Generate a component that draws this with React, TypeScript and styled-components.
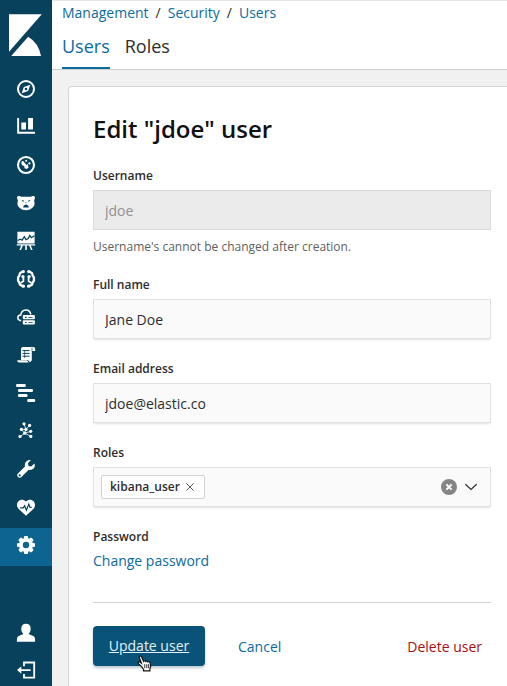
import React from "react";
import styled, { createGlobalStyle } from "styled-components";

const GlobalStyle = createGlobalStyle`
  * { box-sizing: border-box; }
  body { margin: 0; overflow: hidden; background: #f1f1f1; }
  a { text-decoration: none; }
`;

const colors = {
  nav: "#07415b",
  navActive: "#0d6490",
  link: "#0b6b9e",
  text: "#2d2d2d",
  danger: "#a30f14",
};

const Shell = styled.div`
  display: flex;
  width: 507px;
  height: 686px;
  overflow: hidden;
  font-family: "Open Sans", sans-serif;
  font-size: 14px;
  line-height: 20px;
  color: ${colors.text};
`;

const SideNav = styled.nav`
  flex: 0 0 52px;
  display: flex;
  flex-direction: column;
  background: ${colors.nav};
`;

const LogoLink = styled.a`
  display: block;
  height: 72px;
`;

const NavItem = styled.a<{ $active?: boolean }>`
  display: flex;
  justify-content: center;
  height: 38px;
  flex: none;
  padding-top: 7px;
  background: ${(p) => (p.$active ? colors.navActive : "transparent")};
`;

const NavFooter = styled.div`
  margin-top: 50px;
`;

const NavIcon = styled.svg`
  display: block;
  width: 20px;
  height: 20px;
  fill: #fff;
`;

const Main = styled.div`
  flex: 1;
  min-width: 0;
  display: flex;
  flex-direction: column;
  background: #f1f1f1;
`;

const Header = styled.header`
  height: 70px;
  flex: none;
  padding-left: 10px;
  background: #fff;
  border-top: 1px solid #e6e6e6;
  border-bottom: 1px solid #d0d0d0;
`;

const Breadcrumbs = styled.div`
  display: flex;
  gap: 7px;
  padding-top: 2px;
  height: 27px;
`;

const Link = styled.a<{ $danger?: boolean }>`
  color: ${(p) => (p.$danger ? colors.danger : colors.link)};
`;

const Tabs = styled.div`
  display: flex;
  gap: 15px;
  height: 41px;
`;

const Tab = styled.a<{ $selected?: boolean }>`
  height: 41px;
  padding-top: 6px;
  font-size: 18px;
  line-height: 25px;
  color: ${(p) => (p.$selected ? colors.link : colors.text)};
  border-bottom: 2px solid ${(p) => (p.$selected ? colors.link : "transparent")};
`;

const Panel = styled.main`
  flex: 1;
  margin: 16px 0 0 16px;
  padding: 24px 16px 0 24px;
  background: #fff;
  border: 1px solid #d6d6d6;
  border-width: 1px 0 0 1px;
  border-radius: 4px 0 0 0;
`;

const Title = styled.h1`
  margin: 0;
  height: 55px;
  font-size: 24px;
  line-height: 36px;
  font-weight: 600;
  color: #111;
`;

const Row = styled.div<{ $height: number }>`
  height: ${(p) => p.$height}px;
`;

const Label = styled.label`
  display: block;
  height: 24px;
  font-size: 12px;
  line-height: 20px;
  font-weight: 600;
`;

const Input = styled.input`
  display: block;
  width: 100%;
  height: 40px;
  padding: 0 11px;
  font: inherit;
  color: ${colors.text};
  background: #fafafa;
  border: 1px solid #e0e0e0;
  border-radius: 0;
  box-shadow: 0 2px 2px -1px rgba(0, 0, 0, 0.12);
  &:disabled {
    color: #919191;
    background: #ebebeb;
    border-color: #dadada;
    box-shadow: none;
  }
`;

const Help = styled.div`
  padding-top: 7px;
  font-size: 12px;
  line-height: 20px;
  color: #606060;
`;

const ComboBox = styled.div`
  display: flex;
  align-items: center;
  height: 40px;
  padding: 0 13px 0 7px;
  background: #fafafa;
  border: 1px solid #e0e0e0;
  box-shadow: 0 2px 2px -1px rgba(0, 0, 0, 0.12);
`;

const Pill = styled.span`
  display: flex;
  align-items: center;
  gap: 6px;
  height: 24px;
  padding: 0 10px 0 8px;
  font-size: 12px;
  font-weight: 600;
  background: #fff;
  border: 1px solid #d2d2d2;
  border-radius: 2px;
`;

const Controls = styled.span`
  display: flex;
  align-items: center;
  gap: 8px;
  margin-left: auto;
`;

const Glyph = styled.svg`
  display: block;
  flex: none;
`;

const Footer = styled.div`
  display: flex;
  align-items: center;
  padding-top: 23px;
  border-top: 1px solid #d2d2d2;
`;

const Button = styled.a`
  position: relative;
  width: 112px;
  height: 40px;
  margin-right: 33px;
  text-align: center;
  line-height: 40px;
  color: #e3f0f6;
  text-decoration: underline;
  background: #0a5378;
  border-radius: 4px;
  box-shadow: 0 2px 3px rgba(20, 60, 80, 0.28);
`;

const Pointer = styled.svg`
  position: absolute;
  left: 43px;
  top: 29px;
`;

const FooterLink = styled(Link)`
  padding-top: 2px;
  margin-left: ${(p) => (p.$danger ? "auto" : "0")};
  margin-right: ${(p) => (p.$danger ? "9px" : "0")};
`;

const n = colors.nav;

const icons: { name: string; art: React.ReactNode }[] = [
  {
    name: "Discover",
    art: (
      <>
        <circle cx="10" cy="10" r="8" fill="none" stroke="#fff" strokeWidth="2" />
        <path d="M14.3 5.7 12.2 12 5.7 14.3 7.8 8z" />
        <circle cx="10" cy="10" r="1.3" fill={n} />
      </>
    ),
  },
  {
    name: "Visualize",
    art: <path d="M1.2 1h1.9v13.8H19v2H1.2zM5.3 5.6H10v7H5.3zM12.1 1H17v11.6h-4.9z" />,
  },
  {
    name: "Dashboard",
    art: (
      <>
        <circle cx="10" cy="10" r="8" fill="none" stroke="#fff" strokeWidth="2.1" />
        <circle cx="10.2" cy="5.7" r="1" />
        <circle cx="13.4" cy="8.4" r="1.1" />
        <path d="M5.3 8.3 5.9 6.1l1.5.2 3 3.6 1.2-.9 1 3.6-2 1.4-2-.7-.4-2.2-2-.9z" />
      </>
    ),
  },
  {
    name: "Timelion",
    art: (
      <>
        <path d="M1 4.6C1 2.9 3.8 2.600 5.200 3.800h9.600C16.200 2.600 19 2.900 19 4.600c0 1-.5 1.900-.9 2.700l.5 3.200c.1 3.400-3.900 6.700-8.600 6.700s-8.700-3.300-8.600-6.700l.5-3.200C1.500 6.500 1 5.600 1 4.600z" />
        <path d="m6 7 2 .8-.3.9-1.900-.9zm8 0-2 .8.3.9 1.900-.9zM9.100 9.600h1.800L10 10.600zM7.100 14.500l.7-2.100 2.200-.8 2.200.8.7 2.100z" fill={n} />
      </>
    ),
  },
  {
    name: "Canvas",
    art: (
      <>
        <path d="M1.4.8h17.2v11.6H1.4zM.8 13.2h18.4v1.3H.8zM5.2 14.5h1.7L5 18.9H3.4zM9.2 14.5h1.6v4.4H9.2zM13.1 14.5h1.7l1.8 4.4H15z" />
        <path d="m1.6 9.5 2.7-1.3 1.8 1 2.3-3.5 1.6 3 2.2-1.2 1.6-3 1.5 2.2 3.1-2" fill="none" stroke={n} strokeWidth="1.3" />
      </>
    ),
  },
  {
    name: "Machine Learning",
    art: (
      <>
        <g fill="none" stroke="#fff" strokeWidth="2.3">
          <path d="M7 2.3 4 4.2 3.100 7.100 2.100 8.300v3.500l1 1.300.9 2.700L7.300 17.400M13 2.300l3 1.900.9 2.900 1 1.200v3.500l-1 1.300-.9 2.700-3.300 1.600" />
          <path d="M7.400 7.800v4.400l-3 1.800M12.600 7.800v4.400l3 1.800" strokeWidth="1.8" />
        </g>
        <circle cx="7.300" cy="2.600" r="1.6" /><circle cx="12.700" cy="2.600" r="1.6" />
        <circle cx="6.900" cy="7.600" r="1.6" /><circle cx="13.100" cy="7.600" r="1.6" />
        <circle cx="7.400" cy="17.200" r="1.6" /><circle cx="12.600" cy="17.200" r="1.6" />
      </>
    ),
  },
  {
    name: "Infrastructure",
    art: (
      <>
        <path d="M5.2 13.4H4C.9 12.7 1.1 8 4.8 8 5.6 1.5 13.7 1.2 14.8 7.4" fill="none" stroke="#fff" strokeWidth="1.5" />
        <rect x="6.8" y="8.1" width="12.1" height="4.2" rx="1" />
        <rect x="6.8" y="13.2" width="12.1" height="4.4" rx="1" />
        <path d="M9 9.7h1.7v1.2H9zM9 14.9h1.7v1.2H9zM12.5 10h4.2v.7h-4.2zM12.5 15.2h4.2v.7h-4.2z" fill={n} />
      </>
    ),
  },
  {
    name: "Logs",
    art: (
      <>
        <path d="M6.7 2h10.5a2 2 0 0 1 2 2.1v1.8h-3.4v9.2q-.2 2-2.2 1.8L12 15H5V4q0-1.7 1.7-2zM1.1 15.2h10l1.5 2.4H3.3q-2 0-2.2-2.4z" />
        <path d="M6.5 5.6h7M6.5 8.4h7M6.5 11.2h7" stroke={n} strokeWidth="1" />
        <path d="M8.6 5v8M16 2.6v3.3" stroke={n} strokeWidth=".7" />
      </>
    ),
  },
  {
    name: "APM",
    art: (
      <>
        <rect x="0" y="1.1" width="9.8" height="2.9" rx="1.2" />
        <rect x="2" y="6.1" width="15" height="2.9" rx="1.2" />
        <rect x="2" y="11.1" width="9.5" height="2.9" rx="1.2" />
        <rect x="11.2" y="16.1" width="8" height="2.9" rx="1.2" />
      </>
    ),
  },
  {
    name: "Graph",
    art: (
      <>
        <path d="m8 2.8 2 5.6-1.3 3.8L4.2 15.4M5.4 8.4l3.3 3.8 6 3.1M13.6 4.4 10 8.4H5.4M8.7 12.2l6-1.9" fill="none" stroke="#fff" strokeWidth=".8" />
        {[[8, 2.8], [13.6, 4.4], [5.4, 8.4], [10, 8.4], [14.7, 10.3], [8.7, 12.2], [4, 15.5], [14.8, 15.4]].map(([x, y]) => (
          <circle key={`${x}-${y}`} cx={x} cy={y} r="1.6" />
        ))}
      </>
    ),
  },
  {
    name: "Dev Tools",
    art: (
      <path
        fillRule="evenodd"
        d="M14.9 1.1 12 4.3l.5 2.6 2.7.6 3.2-2.9c1.5 3.5-1.3 7.2-5.6 6.2L5.4 18c-2 1.9-5.5-.9-3.7-3.2L9 7.6C8 3.9 11.2.2 14.9 1.1zM3.7 15.2a1.1 1.1 0 1 0 0 2.2 1.1 1.1 0 0 0 0-2.2z"
      />
    ),
  },
  {
    name: "Monitoring",
    art: (
      <>
        <path d="M10 18.8 2.2 11.6C-1.7 6.2 4.6-.3 10 4.6c5.4-4.9 11.7 1.6 7.8 7z" />
        <path d="M4.2 10.8h3.1l1.3-2.1 1.8 4.4 2.4-6 1.2 3.3h1.7" fill="none" stroke={n} strokeWidth="1.2" />
      </>
    ),
  },
  {
    name: "Management",
    art: (
      <>
        {[0, 45, 90, 135].map((a) => (
          <rect key={a} x="7.9" y="1" width="4.2" height="18" rx="1.1" transform={`rotate(${a} 10 10)`} />
        ))}
        <circle cx="10" cy="10" r="7" />
        <circle cx="10" cy="10" r="3.2" fill={colors.navActive} />
      </>
    ),
  },
];

const fields = [
  { label: "Username", value: "jdoe", disabled: true, height: 109, help: "Username's cannot be changed after creation." },
  { label: "Full name", value: "Jane Doe", height: 84 },
  { label: "Email address", value: "jdoe@elastic.co", height: 84 },
];

export default function App() {
  return (
    <Shell>
      <GlobalStyle />
      <SideNav>
        <LogoLink>
          <Glyph width="52" height="72" viewBox="0 0 52 72" fill="#fff">
            <path d="M9 14.2h32.8L9 51.8zM11.2 56 28.2 36.7Q38.7 43 41 56z" />
          </Glyph>
        </LogoLink>
        {icons.map((icon) => (
          <NavItem key={icon.name} $active={icon.name === "Management"} aria-label={icon.name}>
            <NavIcon viewBox="0 0 20 20">{icon.art}</NavIcon>
          </NavItem>
        ))}
        <NavFooter>
          <NavItem aria-label="Account">
            <NavIcon viewBox="0 0 20 20">
              <path d="M10 .8c6.3 0 5.4 8.1 2.6 10.1l5.2 2.3q1.4.9 1.3 5.6H.9q-.1-4.7 1.3-5.6l5.2-2.3C4.6 8.9 3.7.8 10 .8z" />
            </NavIcon>
          </NavItem>
          <NavItem aria-label="Log out">
            <NavIcon viewBox="0 0 20 20">
              <path d="M8 5.3V1.500h10.200v15.200H8v-3.800M2.200 9.100h12.400" fill="none" stroke="#fff" strokeWidth="1.8" />
              <path d="M1 9.100 5.300 5.500v7.200z" />
            </NavIcon>
          </NavItem>
        </NavFooter>
      </SideNav>
      <Main>
        <Header>
          <Breadcrumbs>
            <Link>Management</Link>
            <span>/</span>
            <Link>Security</Link>
            <span>/</span>
            <Link>Users</Link>
          </Breadcrumbs>
          <Tabs>
            <Tab $selected>Users</Tab>
            <Tab>Roles</Tab>
          </Tabs>
        </Header>
        <Panel>
          <Title>Edit "jdoe" user</Title>
          {fields.map((f) => (
            <Row key={f.label} $height={f.height}>
              <Label>{f.label}</Label>
              <Input defaultValue={f.value} disabled={f.disabled} />
              {f.help && <Help>{f.help}</Help>}
            </Row>
          ))}
          <Row $height={84}>
            <Label>Roles</Label>
            <ComboBox>
              <Pill>
                kibana_user
                <Glyph width="8" height="8" viewBox="0 0 8 8" stroke="#555" strokeWidth="1">
                  <path d="m.4.4 7.2 7.2M7.6.4.4 7.6" />
                </Glyph>
              </Pill>
              <Controls>
                <Glyph width="16" height="16" viewBox="0 0 16 16">
                  <circle cx="8" cy="8" r="8" fill="#858585" />
                  <path d="m5.400 5.400 5.200 5.200M10.600 5.400l-5.200 5.200" stroke="#fff" strokeWidth="2" />
                </Glyph>
                <Glyph width="12" height="8" viewBox="0 0 12 8" fill="none" stroke="#2d2d2d" strokeWidth="1.2">
                  <path d="m.4 1.2 5.6 5.3 5.6-5.3" />
                </Glyph>
              </Controls>
            </ComboBox>
          </Row>
          <Row $height={75}>
            <Label>Password</Label>
            <Link>Change password</Link>
          </Row>
          <Footer>
            <Button>
              Update user
              <Pointer width="18" height="18" viewBox="0 0 18 18">
                <path
                  d="M5.2 11.2 2.4 8.6C1.5 7.3 3.1 6.4 4.3 7.3l1.1.9L3.4 2.6C3 .9 5 .5 5.7 2L7.5 6.4c.5-1 1.8-.8 2.2.1.6-.8 1.9-.5 2.2.4.8-.6 2 0 2.2.9l.6 3.6-.8 2.1v2.3H7.6v-1.3z"
                  fill="#fff"
                  stroke="#151515"
                  strokeWidth="1.2"
                />
                <path d="M8.8 9.2v4M10.8 9.2v4M12.6 9.2v4" stroke="#151515" strokeWidth=".9" />
              </Pointer>
            </Button>
            <FooterLink>Cancel</FooterLink>
            <FooterLink $danger>Delete user</FooterLink>
          </Footer>
        </Panel>
      </Main>
    </Shell>
  );
}
